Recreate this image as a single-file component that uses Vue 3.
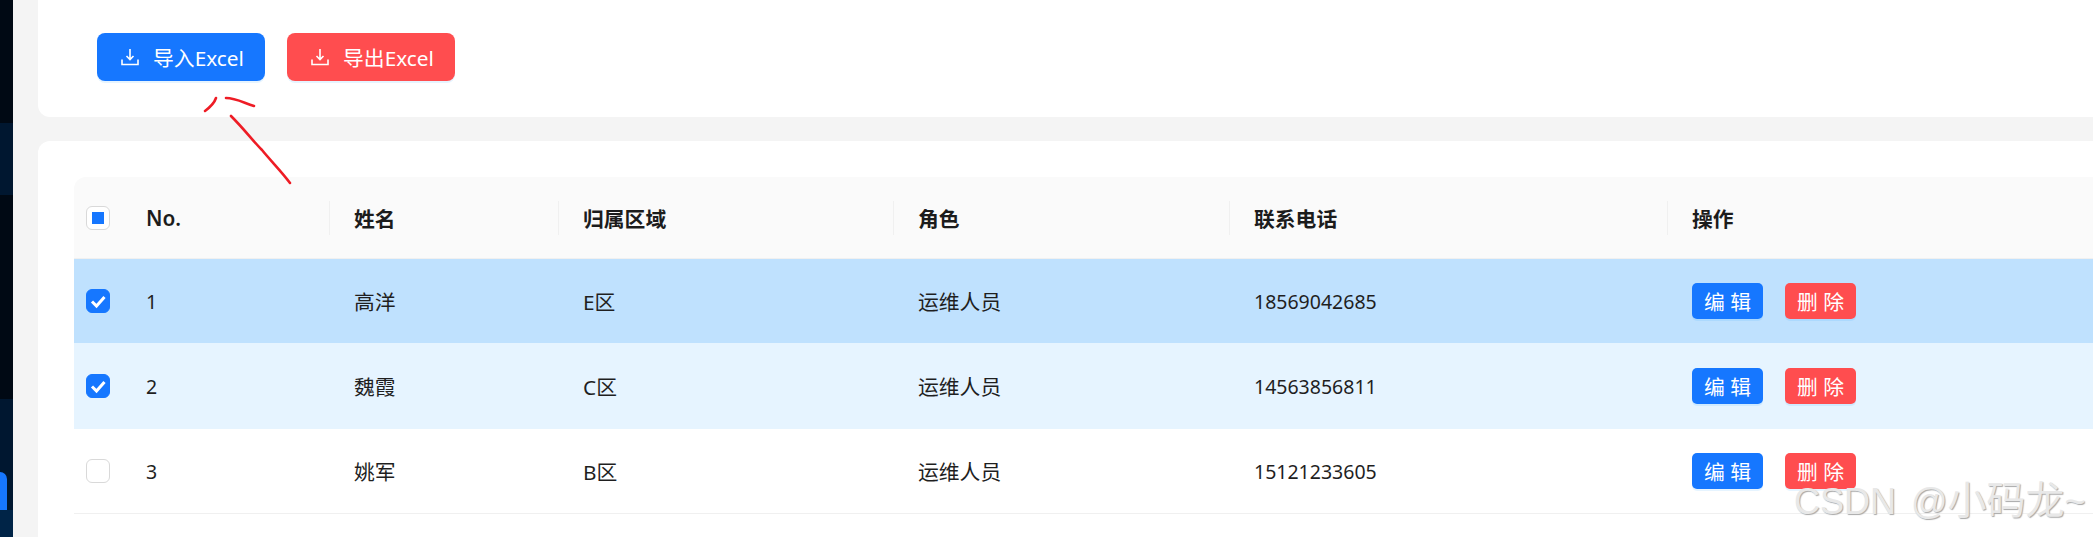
<script setup>
const columns = ['No.', '姓名', '归属区域', '角色', '联系电话', '操作']

const rows = [
  { no: 1, name: '高洋', area: 'E区', role: '运维人员', phone: '18569042685', state: 'active' },
  { no: 2, name: '魏霞', area: 'C区', role: '运维人员', phone: '14563856811', state: 'checked' },
  { no: 3, name: '姚军', area: 'B区', role: '运维人员', phone: '15121233605', state: '' },
]
</script>

<template>
  <div class="page">
    <aside class="sidebar">
      <div class="side-a"></div>
      <div class="side-b"></div>
      <div class="side-c"></div>
      <div class="side-d"><span class="side-active"></span></div>
      <div class="side-e"></div>
    </aside>

    <main class="content">
      <section class="card toolbar">
        <button class="btn blue">
          <svg class="icon" viewBox="0 0 18 18"><path d="M9 1v10M5.5 8 9 11.5 12.5 8M1 11.5V16.5H17V11.5" /></svg>
          <span>导入Excel</span>
        </button>
        <button class="btn red">
          <svg class="icon" viewBox="0 0 18 18"><path d="M9 1v10M5.5 8 9 11.5 12.5 8M1 11.5V16.5H17V11.5" /></svg>
          <span>导出Excel</span>
        </button>
      </section>

      <section class="card table-card">
        <div class="row head">
          <div class="cell check-cell"><span class="check partial"></span></div>
          <div v-for="c in columns" :key="c" class="cell">{{ c }}</div>
        </div>
        <div v-for="r in rows" :key="r.no" class="row" :class="r.state">
          <div class="cell check-cell">
            <span class="check" :class="{ on: r.state }">
              <svg v-if="r.state" viewBox="0 0 24 24"><path d="M6 12.5 10.5 17 18.5 8" /></svg>
            </span>
          </div>
          <div class="cell num">{{ r.no }}</div>
          <div class="cell">{{ r.name }}</div>
          <div class="cell">{{ r.area }}</div>
          <div class="cell">{{ r.role }}</div>
          <div class="cell num">{{ r.phone }}</div>
          <div class="cell actions">
            <button class="mini blue">编 辑</button>
            <button class="mini red">删 除</button>
          </div>
        </div>
      </section>
    </main>

    <svg class="scribble" viewBox="0 0 320 200">
      <path d="M205 111C209 108 214 104 216 98" />
      <path d="M226 98C236 98 244 103 254 106" />
      <path d="M231 116C245 130 252 140 262 150C270 160 282 172 290 183" />
    </svg>
    <div class="watermark">CSDN @<span class="wm-cjk">小码龙</span>~</div>
  </div>
</template>

<style>
html,
body {
  margin: 0;
  overflow: hidden;
}
</style>

<style scoped>
.page {
  position: relative;
  display: flex;
  width: 2093px;
  height: 537px;
  overflow: hidden;
  background: #f4f4f4;
  font-family: "Noto Sans", "Noto Sans CJK SC", sans-serif;
  font-size: 20.8px;
  color: #1f1f1f;
}

.sidebar {
  display: flex;
  flex-direction: column;
  flex: none;
  width: 13px;
}

.side-a {
  height: 123px;
  background: #000914;
}

.side-b {
  height: 72px;
  background: #001730;
}

.side-c {
  height: 204px;
  background: #000914;
}

.side-d {
  display: flex;
  align-items: flex-end;
  height: 111px;
  background: #001730;
}

.side-active {
  width: 7px;
  height: 38px;
  border-radius: 0 7px 0 0;
  background: #1677ff;
}

.side-e {
  flex: 1;
  background: #002447;
}

.content {
  display: flex;
  flex: 1;
  flex-direction: column;
  gap: 24px;
  padding-left: 25px;
  min-width: 0;
}

.card {
  background: #fff;
}

.toolbar {
  display: flex;
  gap: 22px;
  height: 117px;
  padding: 33px 0 0 59px;
  box-sizing: border-box;
  border-radius: 0 0 0 12px;
}

.btn {
  display: flex;
  align-items: center;
  justify-content: center;
  gap: 14px;
  width: 168px;
  height: 48px;
  padding: 0 0 0 3px;
  border: 0;
  border-radius: 8px;
  font: inherit;
  color: #fff;
  box-shadow: 0 2px 0 rgba(5, 145, 255, 0.1);
}

.icon {
  width: 18px;
  height: 18px;
  fill: none;
  stroke: #fff;
  stroke-width: 1.6;
}

.blue {
  background: #1677ff;
}

.red {
  background: #ff4d4f;
}

.table-card {
  flex: 1;
  padding: 36px 0 0 36px;
  border-radius: 12px 0 0 0;
}

.row {
  display: grid;
  grid-template-columns: 48px 208px 229px 335px 336px 438px 1fr;
  height: 85px;
  border-bottom: 1px solid #f0f0f0;
  box-sizing: border-box;
}

.head {
  height: 82px;
  border-radius: 12px 0 0 0;
  background: #fafafa;
  font-weight: 600;
  color: #1c1c1c;
}

.head .cell + .cell + .cell::before {
  content: "";
  position: absolute;
  top: 24px;
  left: -1px;
  width: 1px;
  height: 34px;
  background: #f0f0f0;
}

.active {
  height: 84px;
  background: #bfe1fe;
  border-bottom: 0;
}

.checked {
  height: 86px;
  background: #e6f4ff;
  border-bottom: 0;
}

.cell {
  position: relative;
  display: flex;
  align-items: center;
  padding-left: 24px;
}

.num {
  font-size: 19.5px;
}

.check-cell {
  padding-left: 12px;
}

.check {
  display: flex;
  align-items: center;
  justify-content: center;
  width: 24px;
  height: 24px;
  box-sizing: border-box;
  border: 1px solid #d9d9d9;
  border-radius: 6px;
  background: #fff;
}

.check.on {
  border-color: #1677ff;
  background: #1677ff;
}

.check svg {
  width: 24px;
  height: 24px;
  flex: none;
  fill: none;
  stroke: #fff;
  stroke-width: 3;
}

.partial::after {
  content: "";
  width: 12px;
  height: 12px;
  background: #1677ff;
}

.actions {
  gap: 22px;
}

.mini {
  width: 71px;
  height: 36px;
  padding: 0;
  border: 0;
  border-radius: 5px;
  font: inherit;
  color: #fff;
  box-shadow: 0 2px 0 rgba(5, 145, 255, 0.1);
}

.scribble {
  position: absolute;
  top: 0;
  left: 0;
  width: 320px;
  height: 200px;
  fill: none;
  stroke: #ee1c25;
  stroke-width: 2.6;
  stroke-linecap: round;
}

.watermark {
  position: absolute;
  top: 477px;
  left: 1794px;
  font-family: "Liberation Sans", "Noto Sans CJK SC", sans-serif;
  font-size: 36px;
  line-height: 48px;
  word-spacing: 5px;
  white-space: nowrap;
  color: #e8e8e8;
  text-shadow: 1px 1px 1px #a8a8a8;
}

.wm-cjk {
  font-size: 39px;
}
</style>
